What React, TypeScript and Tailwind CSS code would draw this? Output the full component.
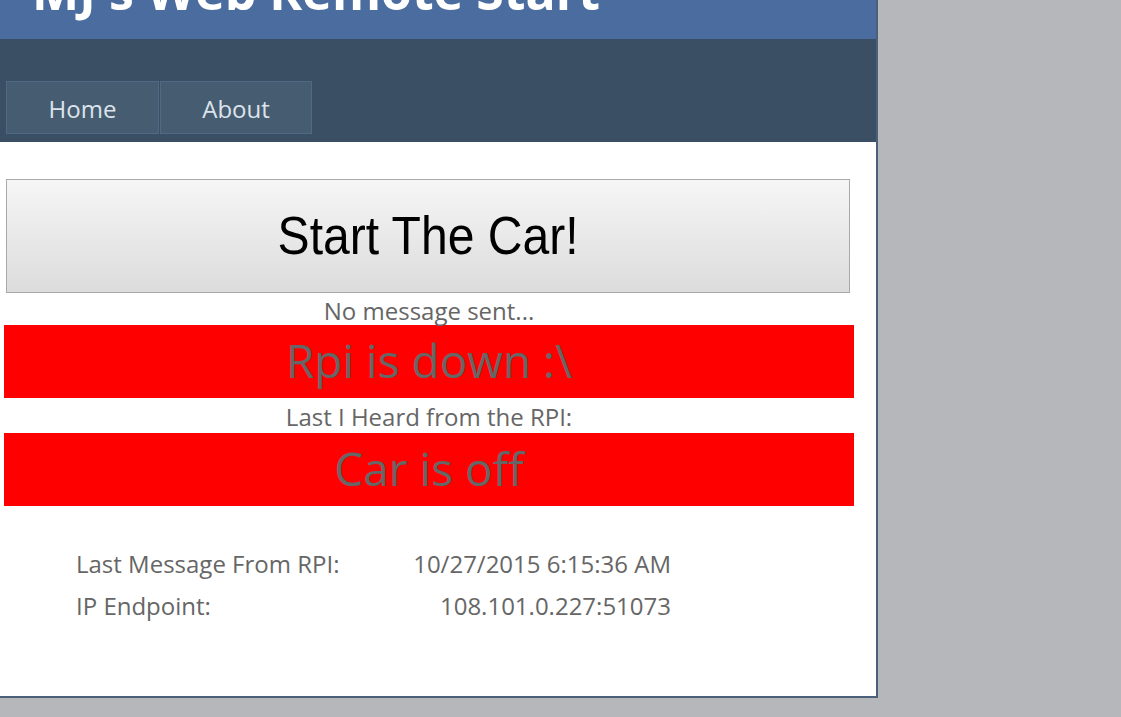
import React from 'react';

const StatusBar: React.FC<{ text: string }> = ({ text }) => (
  <div className="h-[73px] bg-[#ff0000] flex items-center justify-center text-[46px] text-[#666666] leading-none pb-[4px]">
    {text}
  </div>
);

const App: React.FC = () => {
  return (
    <div className="min-h-screen bg-[#b6b7bb] font-['Open_Sans',sans-serif]">
      <div className="w-[878px] h-[698px] bg-white border-r-2 border-b-2 border-[#4b6079] flex flex-col">
        {/* Header */}
        <div className="h-[39px] bg-[#4b6c9e] overflow-hidden shrink-0">
          <h1 className="mt-[-34px] ml-[32px] text-[50px] font-bold text-white leading-[50px] whitespace-nowrap">
            MJ's Web Remote Start
          </h1>
        </div>

        {/* Nav */}
        <div className="h-[103px] bg-[#3a4f63] flex items-end pb-[8px] pl-[6px] gap-[1px] shrink-0">
          <div className="w-[153px] h-[53px] bg-[#465c71] border border-[#4e6a86] flex items-center justify-center pt-[3px] text-[24px] leading-none text-[#dde4ec]">
            Home
          </div>
          <div className="w-[152px] h-[53px] bg-[#465c71] border border-[#4e6a86] flex items-center justify-center pt-[3px] text-[24px] leading-none text-[#dde4ec]">
            About
          </div>
        </div>

        {/* Main */}
        <div className="pt-[37px] pl-[4px] w-[854px]">
          <div className="px-[2px] w-[850px]">
            <button className="w-[844px] h-[114px] border border-[#a9a9a9] bg-gradient-to-b from-[#f6f6f6] to-[#dcdcdc] text-black flex items-center justify-center pb-[3px]">
              <span className="inline-block text-[54px] leading-none scale-x-[0.89] font-['Liberation_Sans',Arial,sans-serif]">
                Start The Car!
              </span>
            </button>
          </div>
          <div className="h-[32px] flex items-center justify-center text-[24px] leading-none text-[#666666] pt-[3px]">
            No message sent...
          </div>
          <StatusBar text="Rpi is down :\" />
          <div className="h-[35px] flex items-center justify-center text-[24px] leading-none text-[#666666] pt-[3px]">
            Last I Heard from the RPI:
          </div>
          <StatusBar text="Car is off" />

          <div className="mt-[42px] ml-[72px] w-[595px] grid grid-cols-[1fr_auto] gap-y-[10px] text-[24px] text-[#666666] leading-[32px]">
            <div>Last Message From RPI:</div>
            <div className="text-right">10/27/2015 6:15:36 AM</div>
            <div>IP Endpoint:</div>
            <div className="text-right">108.101.0.227:51073</div>
          </div>
        </div>
      </div>
    </div>
  );
};

export default App;
